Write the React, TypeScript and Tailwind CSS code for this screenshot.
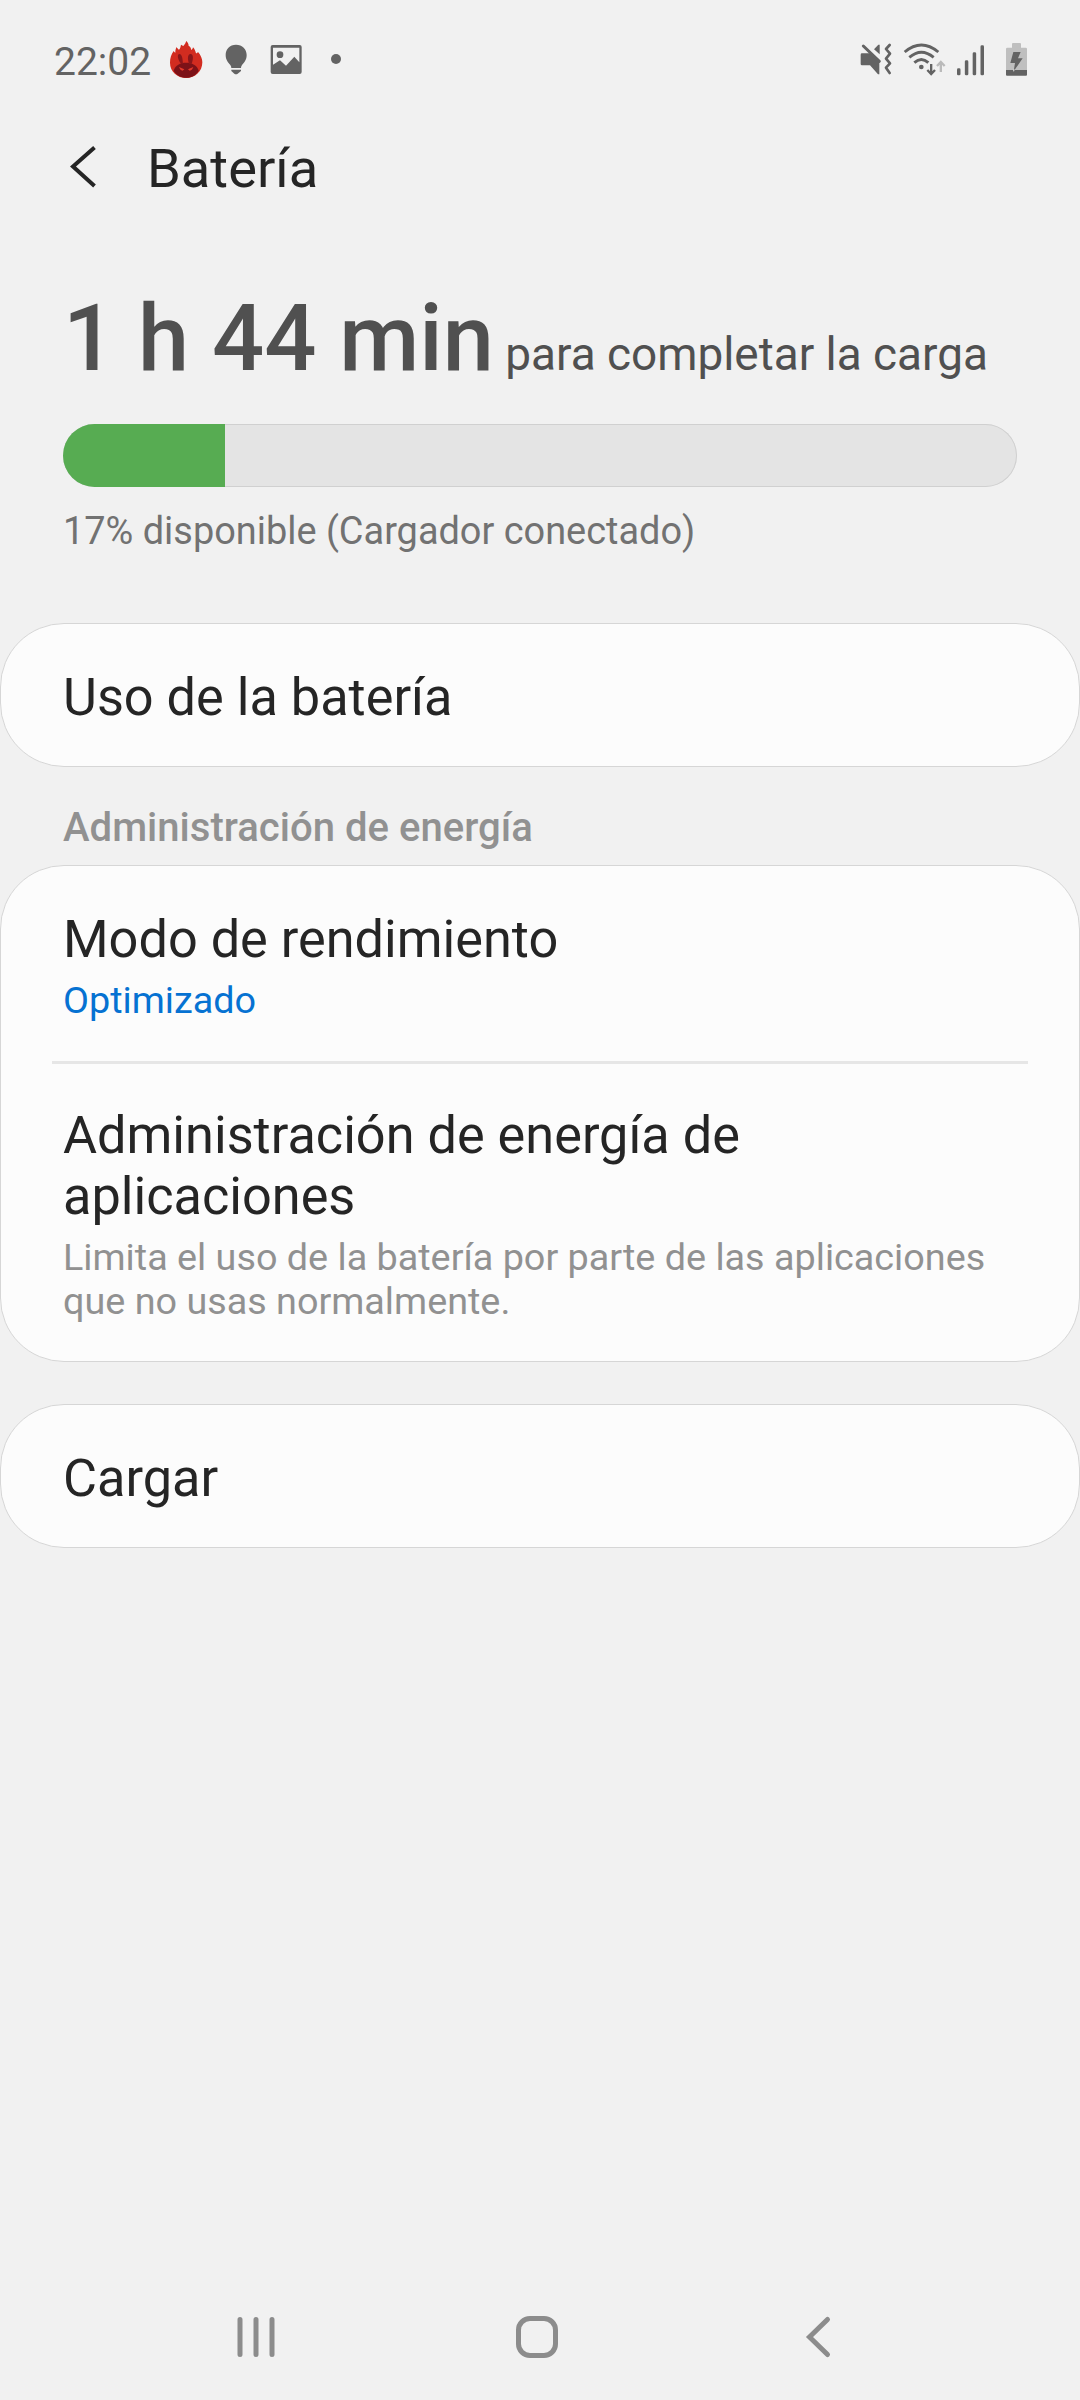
import type { ReactNode } from 'react';

const INK = '#636363';

function FlameRabbitIcon() {
  return (
    <svg width="40" height="60" viewBox="378 0 120 180">
      <path
        d="M390 98C390 84 394 72 401 63C403 66 404 67 406 68C406 61 407 56 410 51C412 55 414 57 417 59C421 55 422 49 423 44C426 46 428 47 430 48C434 44 437 39 439 33C444 38 446 43 446 48C451 49 453 55 454 60C457 58 458 56 459 52C464 57 466 63 468 70C471 70 472 68 474 66C482 75 487 86 487 97C487 125 465 144 439 144C412 144 390 125 390 98Z"
        fill="#d22c20"
      />
      <path d="M401 122C406 105 421 98 438 98C456 98 471 105 476 122C468 136 455 143 439 143C422 143 409 136 401 122Z" fill="#7c1218" />
      <path d="M424 103C416 93 412 82 414 75C417 70 423 72 425 78C428 85 428 93 429 102ZM447 102C444 91 442 82 446 75C449 70 456 71 458 77C460 84 458 94 454 103Z" fill="#8a161a" />
      <path d="M417 111L433 118L428 122C422 121 419 117 417 111ZM460 111L444 118L449 122C455 121 458 117 460 111Z" fill="#e2382b" />
    </svg>
  );
}

function BulbIcon() {
  return (
    <svg width="32" height="60" viewBox="540 0 96 180" fill={INK}>
      <path d="M588 44C569 44 557 58 557 75C557 89 564 97 571 105C573 108 574 111 574 114H603C603 111 604 108 606 105C613 97 620 89 620 75C620 58 607 44 588 44Z" />
      <path d="M574 119H603V123L593 131Q588 135 583 131L574 123Z" />
    </svg>
  );
}

function PictureIcon() {
  return (
    <svg width="38" height="60" viewBox="681 0 114 180" fill={INK}>
      <path fillRule="evenodd" d="M698 45H779Q785 45 785 51V126Q785 132 779 132H698Q692 132 692 126V51Q692 45 698 45ZM699 53V104L720 91L738 107L763 80L778 97V53Z" />
      <circle cx="720" cy="74" r="10" />
    </svg>
  );
}

function MuteVibrateIcon() {
  return (
    <svg width="36" height="60" viewBox="54 0 108 180" fill={INK}>
      <path d="M66 70H92L118 95V133H114L90 106H66Q62 106 62 102V74Q62 70 66 70Z" />
      <path d="M70 48L118 94" stroke={INK} strokeWidth="9" strokeLinecap="round" />
      <path d="M102 58L115 44H119V73Z" />
      <path d="M149 45L138 57L150 71L138 86L150 100L138 113L149 129" fill="none" stroke={INK} strokeWidth="8" strokeLinecap="round" strokeLinejoin="round" />
    </svg>
  );
}

function WifiIcon() {
  return (
    <svg width="47" height="60" viewBox="183 0 141 180" fill="none" stroke={INK} strokeWidth="8.5">
      <path d="M194 66Q244 24 295 66" />
      <path d="M208 82Q244 51 281 82" />
      <path d="M223 98Q244 79 265 98" />
      <circle cx="244" cy="111" r="7" fill={INK} stroke="none" />
      <path d="M273.500 102V131M262 120L273.500 132L285 120" strokeWidth="7" />
      <path d="M302.500 126V97M291 108L302.500 96L314 108" stroke="#bababa" strokeWidth="7" />
    </svg>
  );
}

function SignalIcon() {
  return (
    <svg width="32" height="60" viewBox="342 0 96 180" fill={INK}>
      <rect x="351" y="115" width="10.500" height="21" rx="4" />
      <rect x="374.500" y="91" width="10.500" height="45" rx="4" />
      <rect x="398" y="67" width="10.500" height="69" rx="4" />
      <rect x="421.500" y="46" width="10.500" height="90" rx="4" />
    </svg>
  );
}

function BatteryIcon() {
  return (
    <svg width="27" height="60" viewBox="489 0 81 180">
      <path d="M516 42Q516 39 519 39H540Q543 39 543 42V53H557Q561 53 561 57V121H498V57Q498 53 502 53H516Z" fill="#bfbfbf" />
      <path d="M498 120H561V134Q561 137 558 137H501Q498 137 498 134Z" fill={INK} />
      <path d="M520 66H542L534 85H548L521 124L525 99H511Z" fill={INK} />
      <path d="M521 124L522 118" stroke="#e8e8e8" strokeWidth="3" />
    </svg>
  );
}

function StatusBar() {
  return (
    <div className="flex h-[120px] items-center pl-[54px] pr-[50px]">
      <span className="w-[98px] pt-[3px] text-[39px] leading-[46px] text-[#636363]">22:02</span>
      <div className="ml-[14px]"><FlameRabbitIcon /></div>
      <div className="ml-[14px]"><BulbIcon /></div>
      <div className="ml-[15px]"><PictureIcon /></div>
      <div className="mb-[2px] ml-[26px] size-[10px] rounded-full bg-[#636363]" />
      <div className="ml-auto"><MuteVibrateIcon /></div>
      <div className="ml-[7px]"><WifiIcon /></div>
      <div className="ml-[6px]"><SignalIcon /></div>
      <div className="ml-[17px]"><BatteryIcon /></div>
    </div>
  );
}

function Card({ className = '', children }: { className?: string; children: ReactNode }) {
  return <section className={`rounded-[64px] border border-[#d6d6d6] bg-[#fcfcfc] pt-[43px] ${className}`}>{children}</section>;
}

function RowTitle({ children }: { children: ReactNode }) {
  return <h2 className="px-[62px] text-[52.25px] leading-[61px] text-[#252525]">{children}</h2>;
}

export default function App() {
  const level = 17;
  return (
    <div className="flex h-[2400px] w-[1080px] flex-col overflow-hidden bg-[#f1f1f1] font-['Roboto',sans-serif]">
      <StatusBar />

      <header className="flex h-[99px] items-center pl-[63px]">
        <svg width="40" height="99" viewBox="0 0 40 99" fill="none" stroke="#252525" strokeWidth="4">
          <path d="M31.500 27.500L10 46.500L31.500 66" />
        </svg>
        <h1 className="mb-[2px] ml-[44px] text-[54.3px] leading-[64px] text-[#252525]">Batería</h1>
      </header>

      <section className="mt-[66px] px-[63px]">
        <p className="h-[108px] whitespace-nowrap text-[45.9px] leading-[108px] text-[#505050]">
          <span className="text-[91.9px] font-medium">1 h 44 min</span> para completar la carga
        </p>
        <div className="mt-[31px] h-[63px] overflow-hidden rounded-full bg-[#e4e4e4] shadow-[inset_0_0_0_1px_#d0d0d0]">
          <div className="h-full bg-[#57ac52]" style={{ width: `${level}%` }} />
        </div>
        <p className="mt-[22px] text-[37.9px] leading-[44px] text-[#727272]">17% disponible (Cargador conectado)</p>
      </section>

      <Card className="mt-[70px] h-[144px]">
        <RowTitle>Uso de la batería</RowTitle>
      </Card>

      <h3 className="mt-[38px] px-[63px] text-[40.1px] font-medium leading-[46px] text-[#919191]">Administración de energía</h3>

      <Card className="mt-[14px] h-[497px]">
        <RowTitle>Modo de rendimiento</RowTitle>
        <p className="mt-[8px] px-[62px] text-[37.75px] leading-[44px] text-[#0672d2]">Optimizado</p>
        <div className="mx-[51px] mt-[39px] h-[3px] bg-[#e6e6e6]" />
        <div className="pt-[41px]">
          <RowTitle>
            Administración de energía de<br />aplicaciones
          </RowTitle>
          <p className="mt-[8px] whitespace-nowrap px-[62px] text-[37.75px] leading-[44px] text-[#919191]">
            Limita el uso de la batería por parte de las aplicaciones<br />que no usas normalmente.
          </p>
        </div>
      </Card>

      <Card className="mt-[42px] h-[144px]">
        <RowTitle>Cargar</RowTitle>
      </Card>

      <nav className="mt-auto flex h-[126px] items-center gap-[221px] pl-[226px]">
        <svg width="60" height="60" viewBox="0 0 60 60" stroke="#8c8c8c" strokeWidth="5" strokeLinecap="round">
          <path d="M14 12.500V47.500M30 12.500V47.500M46 12.500V47.500" />
        </svg>
        <svg width="60" height="60" viewBox="0 0 60 60" fill="none" stroke="#8c8c8c" strokeWidth="5">
          <rect x="11.500" y="11.500" width="37" height="37" rx="11.500" />
        </svg>
        <svg width="60" height="60" viewBox="0 0 60 60" fill="none" stroke="#8c8c8c" strokeWidth="5" strokeLinecap="round">
          <path d="M39.500 12.500L21.500 30L39.500 47.500" />
        </svg>
      </nav>
    </div>
  );
}
